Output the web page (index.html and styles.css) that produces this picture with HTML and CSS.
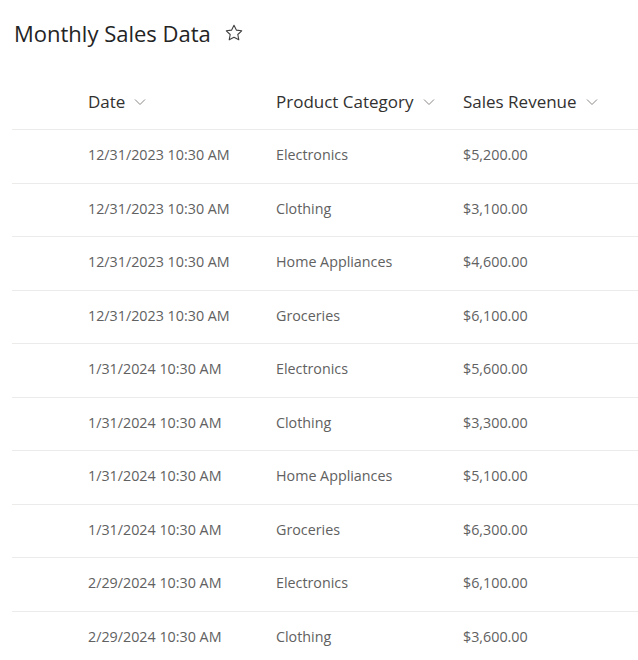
FILE: index.html
```html
<!DOCTYPE html>
<html>
<head>
<meta charset="utf-8">
<link rel="stylesheet" href="styles.css">
</head>
<body>
<div class="page">
  <div class="title-bar">
    <h1 class="title">Monthly Sales Data</h1>
    <svg class="star" width="20" height="20" viewBox="0 0 20 20"><path d="M10 2.2l2.35 4.9 5.35.7-3.9 3.7 1 5.3L10 14.2l-4.8 2.6 1-5.3-3.9-3.7 5.35-.7z" fill="none" stroke="#424242" stroke-width="1.1" stroke-linejoin="round"/></svg>
  </div>
  <div class="list">
    <div class="row head">
      <div class="cell"><span>Date</span><svg class="chev" width="12" height="8" viewBox="0 0 12 8"><path d="M1 1.5l5 5 5-5" fill="none" stroke="#8a8886" stroke-width="1"/></svg></div>
      <div class="cell"><span>Product Category</span><svg class="chev" width="12" height="8" viewBox="0 0 12 8"><path d="M1 1.5l5 5 5-5" fill="none" stroke="#8a8886" stroke-width="1"/></svg></div>
      <div class="cell"><span>Sales Revenue</span><svg class="chev" width="12" height="8" viewBox="0 0 12 8"><path d="M1 1.5l5 5 5-5" fill="none" stroke="#8a8886" stroke-width="1"/></svg></div>
    </div>
    <div class="row"><div class="cell">12/31/2023 10:30 AM</div><div class="cell">Electronics</div><div class="cell">$5,200.00</div></div>
    <div class="row"><div class="cell">12/31/2023 10:30 AM</div><div class="cell">Clothing</div><div class="cell">$3,100.00</div></div>
    <div class="row"><div class="cell">12/31/2023 10:30 AM</div><div class="cell">Home Appliances</div><div class="cell">$4,600.00</div></div>
    <div class="row"><div class="cell">12/31/2023 10:30 AM</div><div class="cell">Groceries</div><div class="cell">$6,100.00</div></div>
    <div class="row"><div class="cell">1/31/2024 10:30 AM</div><div class="cell">Electronics</div><div class="cell">$5,600.00</div></div>
    <div class="row"><div class="cell">1/31/2024 10:30 AM</div><div class="cell">Clothing</div><div class="cell">$3,300.00</div></div>
    <div class="row"><div class="cell">1/31/2024 10:30 AM</div><div class="cell">Home Appliances</div><div class="cell">$5,100.00</div></div>
    <div class="row"><div class="cell">1/31/2024 10:30 AM</div><div class="cell">Groceries</div><div class="cell">$6,300.00</div></div>
    <div class="row"><div class="cell">2/29/2024 10:30 AM</div><div class="cell">Electronics</div><div class="cell">$6,100.00</div></div>
    <div class="row"><div class="cell">2/29/2024 10:30 AM</div><div class="cell">Clothing</div><div class="cell">$3,600.00</div></div>
  </div>
</div>
</body>
</html>
```
FILE: styles.css
```css
html, body {
  margin: 0;
  padding: 0;
  background: #ffffff;
}
body {
  font-family: "Open Sans", "Noto Sans", sans-serif;
  color: #616161;
  overflow: hidden;
}
.page {
  width: 638px;
  height: 660px;
}
.title-bar {
  display: flex;
  align-items: center;
  gap: 13px;
  padding: 17px 0 0 14px;
  height: 32px;
}
.title {
  margin: 0;
  font-size: 22px;
  font-weight: 400;
  color: #242424;
}
.star {
  display: block;
  margin-top: 0;
}
.list {
  margin: 27px 0 0 12px;
}
.row {
  display: grid;
  grid-template-columns: 188px 187px 1fr;
  padding-left: 76px;
  height: 52.5px;
  align-items: center;
  border-bottom: 1px solid #edebe9;
  font-size: 14.3px;
}
.row .cell {
  padding-bottom: 3px;
}
.row.head {
  height: 53px;
  font-size: 17px;
  color: #323130;
}
.row.head .cell {
  display: flex;
  align-items: center;
  gap: 9px;
  padding-bottom: 3px;
}
.chev {
  display: block;
  margin-top: 1px;
}
```
